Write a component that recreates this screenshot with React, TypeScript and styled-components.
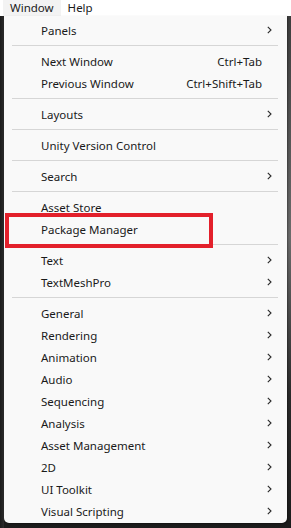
import { Fragment } from 'react';
import styled, { createGlobalStyle } from 'styled-components';

type Entry =
	| { kind: 'item'; label: string; shortcut?: string; sub?: boolean; marked?: boolean }
	| { kind: 'sep' };

const entries: Array<Entry> = [
	{ kind: 'item', label: 'Panels', sub: true },
	{ kind: 'sep' },
	{ kind: 'item', label: 'Next Window', shortcut: 'Ctrl+Tab' },
	{ kind: 'item', label: 'Previous Window', shortcut: 'Ctrl+Shift+Tab' },
	{ kind: 'sep' },
	{ kind: 'item', label: 'Layouts', sub: true },
	{ kind: 'sep' },
	{ kind: 'item', label: 'Unity Version Control' },
	{ kind: 'sep' },
	{ kind: 'item', label: 'Search', sub: true },
	{ kind: 'sep' },
	{ kind: 'item', label: 'Asset Store' },
	{ kind: 'item', label: 'Package Manager', marked: true },
	{ kind: 'sep' },
	{ kind: 'item', label: 'Text', sub: true },
	{ kind: 'item', label: 'TextMeshPro', sub: true },
	{ kind: 'sep' },
	{ kind: 'item', label: 'General', sub: true },
	{ kind: 'item', label: 'Rendering', sub: true },
	{ kind: 'item', label: 'Animation', sub: true },
	{ kind: 'item', label: 'Audio', sub: true },
	{ kind: 'item', label: 'Sequencing', sub: true },
	{ kind: 'item', label: 'Analysis', sub: true },
	{ kind: 'item', label: 'Asset Management', sub: true },
	{ kind: 'item', label: '2D', sub: true },
	{ kind: 'item', label: 'UI Toolkit', sub: true },
	{ kind: 'item', label: 'Visual Scripting', sub: true },
];

const Chevron = () => (
	<svg width="5" height="8" viewBox="0 0 5 8">
		<path d="M0.8 0.8 L4 4 L0.8 7.2" fill="none" stroke="#2a2a2a" strokeWidth="1.1" />
	</svg>
);

const App = () => {
	return (
		<Page>
			<GlobalStyle />
			<MenuBar>
				<BarItem $active>Window</BarItem>
				<BarItem>Help</BarItem>
			</MenuBar>

			<Dropdown>
				{entries.map((entry, i) => (
					<Fragment key={i}>
						{entry.kind === 'sep' ? (
							<Separator />
						) : (
							<Item>
								<Label>{entry.label}</Label>
								{entry.shortcut && <Shortcut>{entry.shortcut}</Shortcut>}
								<Trailing>{entry.sub && <Chevron />}</Trailing>
								{entry.marked && <Highlight />}
							</Item>
						)}
					</Fragment>
				))}
			</Dropdown>
		</Page>
	);
};

const GlobalStyle = createGlobalStyle`
	html, body {
		margin: 0;
		padding: 0;
		background: #1e1e1e;
	}
	body {
		font-family: 'Noto Sans', 'Open Sans', sans-serif;
		-webkit-font-smoothing: antialiased;
	}
`;

const Page = styled.div`
	width: 291px;
	height: 528px;
	overflow: hidden;
	background:
		linear-gradient(90deg, #1b1b1b 0px, #2c2c2c 4px, transparent 4px),
		linear-gradient(180deg, #3a3a3a 0%, #6b6b6b 45%, #2a2a2a 75%, #1c1c1c 100%);
`;

const MenuBar = styled.div`
	height: 16px;
	background: #ffffff;
	display: flex;
	align-items: stretch;
	padding-left: 3px;
	font-size: 11.5px;
	color: #1a1a1a;
`;

const BarItem = styled.div<{ $active?: boolean }>`
	display: flex;
	align-items: center;
	padding: 0 7px;
	line-height: 16px;
	background: ${(p) => (p.$active ? '#f3f3f3' : 'transparent')};
`;

const Dropdown = styled.div`
	position: relative;
	margin-left: 4px;
	width: 283px;
	padding: 3px 0 1px;
	background: #f9f9f9;
	border-radius: 0 0 5px 5px;
	box-shadow: 1px 1px 2px rgba(0, 0, 0, 0.35);
	font-size: 11.5px;
	color: #1a1a1a;
`;

const Item = styled.div`
	position: relative;
	height: 22px;
	display: flex;
	align-items: center;
	padding: 0 15px 0 37px;
`;

const Label = styled.span`
	flex: 1;
	white-space: nowrap;
`;

const Shortcut = styled.span`
	white-space: nowrap;
`;

const Trailing = styled.span`
	width: 10px;
	display: flex;
	justify-content: flex-end;
	align-items: center;
`;

const Separator = styled.div`
	height: 9px;
	display: flex;
	align-items: center;
	padding: 0 9px 0 8px;

	&::after {
		content: '';
		flex: 1;
		height: 1px;
		background: #d6d6d6;
	}
`;

const Highlight = styled.div`
	position: absolute;
	left: 1px;
	top: -5px;
	width: 208px;
	height: 35px;
	box-sizing: border-box;
	border: 4px solid #e3202b;
	pointer-events: none;
`;

export default App;
